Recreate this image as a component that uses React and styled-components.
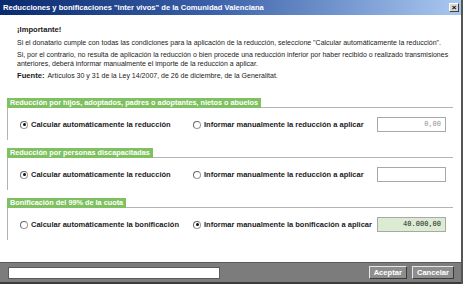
import styled, { createGlobalStyle } from "styled-components";

const GlobalStyle = createGlobalStyle`
  html, body {
    margin: 0;
    padding: 0;
    background: #ffffff;
    overflow: hidden;
  }
`;

const Window = styled.div`
  width: 463px;
  height: 284px;
  box-sizing: border-box;
  display: flex;
  flex-direction: column;
  border-right: 2px solid #555555;
  background: #ffffff;
  font-family: "Liberation Sans", Arial, sans-serif;
  color: #1a1a1a;
`;

const TitleBar = styled.div`
  height: 15px;
  flex: none;
  display: flex;
  align-items: center;
  justify-content: space-between;
  padding: 0 2px 0 3px;
  background: linear-gradient(to right, #0a2a6e 0%, #3a5fa8 45%, #a9c8f0 100%);
`;

const Title = styled.div`
  color: #ffffff;
  font-weight: bold;
  font-size: 7.6px;
  white-space: nowrap;
`;

const CloseButton = styled.div`
  width: 10px;
  height: 9px;
  box-sizing: border-box;
  display: flex;
  align-items: center;
  justify-content: center;
  background: #d8d6d0;
  border: 1px solid;
  border-color: #ffffff #404040 #404040 #ffffff;
  font-size: 8px;
  font-weight: bold;
  line-height: 1;
  color: #000;
`;

const Content = styled.div`
  flex: 1;
  padding: 10px 8px 0 7px;
`;

const Intro = styled.div`
  padding-left: 10px;
  font-size: 7px;
`;

const Heading = styled.div`
  font-weight: bold;
  font-size: 7.6px;
  line-height: 9px;
  margin-bottom: 4px;
`;

const Para = styled.p`
  margin: 0 0 3px;
  line-height: 9px;
`;

const Strong = styled.span`
  font-weight: bold;
  font-size: 7.6px;
  margin-right: 3px;
`;

const Section = styled.div`
  margin-top: ${(p) => p.$top}px;
`;

const SectionHead = styled.div`
  display: flex;
  align-items: flex-end;
  height: 10px;
`;

const Tab = styled.div`
  background: #7fc160;
  color: #ffffff;
  font-weight: bold;
  font-size: 7.3px;
  height: 10px;
  line-height: 10px;
  padding: 0 3px;
  white-space: nowrap;
`;

const Rule = styled.div`
  flex: 1;
  border-bottom: 1px solid #b4b4b4;
`;

const SectionBody = styled.div`
  height: 32px;
  box-sizing: border-box;
  border-left: 1px solid #b4b4b4;
  padding-top: 9px;
`;

const Row = styled.div`
  display: grid;
  grid-template-columns: 173px 1fr 69px;
  align-items: center;
  padding-left: 12px;
  padding-right: 7px;
  height: 15px;
`;

const Option = styled.label`
  display: flex;
  align-items: center;
  gap: 3px;
  font-weight: bold;
  font-size: 7.5px;
  white-space: nowrap;
`;

const Radio = styled.span`
  width: 8px;
  height: 8px;
  box-sizing: border-box;
  border-radius: 50%;
  border: 1px solid #9a9a9a;
  border-top-color: #6a6a6a;
  border-left-color: #6a6a6a;
  background: #ffffff;
  display: flex;
  align-items: center;
  justify-content: center;

  &::after {
    content: "";
    width: 3px;
    height: 3px;
    border-radius: 50%;
    background: ${(p) => (p.$on ? "#111" : "transparent")};
  }
`;

const Amount = styled.div`
  height: 15px;
  box-sizing: border-box;
  border: 1px solid #a8a8a8;
  background: ${(p) => (p.$filled ? "#dcecd2" : "#ffffff")};
  color: ${(p) => (p.$muted ? "#9a9a9a" : "#2a2a2a")};
  font-family: "DejaVu Sans Mono", "Liberation Mono", monospace;
  font-size: 7px;
  text-align: right;
  line-height: 13px;
  padding-right: 4px;
`;

const Footer = styled.div`
  height: 22px;
  flex: none;
  box-sizing: border-box;
  display: flex;
  align-items: center;
  padding: 0 7px 0 8px;
  background: #7c7c7c;
  border-top: 1px solid #5a5a5a;
  border-bottom: 2px solid #3c3c3c;
`;

const StatusField = styled.div`
  width: 212px;
  height: 12px;
  background: #ffffff;
  border: 1px solid #5a5a5a;
  box-sizing: border-box;
`;

const Spacer = styled.div`
  flex: 1;
`;

const Button = styled.div`
  height: 13px;
  box-sizing: border-box;
  padding: 0 4px;
  margin-left: 5px;
  display: flex;
  align-items: center;
  background: #8e8e8e;
  border: 1px solid;
  border-color: #e6e6e6 #3a3a3a #3a3a3a #e6e6e6;
  color: #ffffff;
  font-weight: bold;
  font-size: 7.6px;
`;

const sections = [
  {
    title: "Reducción por hijos, adoptados, padres o adoptantes, nietos o abuelos",
    first: "Calcular automáticamente la reducción",
    second: "Informar manualmente la reducción a aplicar",
    pick: 0,
    value: "0,00",
    top: 18,
  },
  {
    title: "Reducción por personas discapacitadas",
    first: "Calcular automáticamente la reducción",
    second: "Informar manualmente la reducción a aplicar",
    pick: 0,
    value: "",
    top: 8,
  },
  {
    title: "Bonificación del 99% de la cuota",
    first: "Calcular automáticamente la bonificación",
    second: "Informar manualmente la bonificación a aplicar",
    pick: 1,
    value: "40.000,00",
    top: 8,
  },
];

export default function App() {
  return (
    <>
      <GlobalStyle />
      <Window>
        <TitleBar>
          <Title>Reducciones y bonificaciones "inter vivos" de la Comunidad Valenciana</Title>
          <CloseButton>×</CloseButton>
        </TitleBar>
        <Content>
          <Intro>
            <Heading>¡Importante!</Heading>
            <Para>
              Si el donatario cumple con todas las condiciones para la aplicación de la reducción,
              seleccione "Calcular automáticamente la reducción".
            </Para>
            <Para>
              Si, por el contrario, no resulta de aplicación la reducción o bien procede una reducción
              inferior por haber recibido o realizado transmisiones anteriores, deberá informar
              manualmente el importe de la reducción a aplicar.
            </Para>
            <Para>
              <Strong>Fuente:</Strong>
              Artículos 30 y 31 de la Ley 14/2007, de 26 de diciembre, de la Generalitat.
            </Para>
          </Intro>
          {sections.map((s) => (
            <Section key={s.title} $top={s.top}>
              <SectionHead>
                <Tab>{s.title}</Tab>
                <Rule />
              </SectionHead>
              <SectionBody>
                <Row>
                  <Option>
                    <Radio $on={s.pick === 0} />
                    {s.first}
                  </Option>
                  <Option>
                    <Radio $on={s.pick === 1} />
                    {s.second}
                  </Option>
                  <Amount $filled={s.pick === 1} $muted={s.pick === 0}>
                    {s.value}
                  </Amount>
                </Row>
              </SectionBody>
            </Section>
          ))}
        </Content>
        <Footer>
          <StatusField />
          <Spacer />
          <Button>Aceptar</Button>
          <Button>Cancelar</Button>
        </Footer>
      </Window>
    </>
  );
}
